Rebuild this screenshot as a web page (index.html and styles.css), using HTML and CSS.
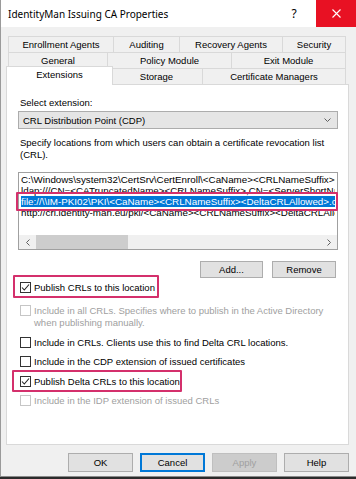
FILE: index.html
```html
<!DOCTYPE html>
<html lang="en">
  <head>
    <meta charset="UTF-8" />
    <meta name="viewport" content="width=device-width, initial-scale=1.0" />
    <title>IdentityMan Issuing CA Properties</title>
    <link rel="stylesheet" href="styles.css">
  </head>
  <body>
    <div class="window">
      <div class="titlebar">
        <span class="title">IdentityMan Issuing CA Properties</span>
        <span class="help">?</span>
        <span class="close">
          <svg width="9" height="9" viewBox="0 0 9 9">
            <path d="M0.5 0.5L8.5 8.5M8.5 0.5L0.5 8.5" stroke="#fff" stroke-width="1.1" fill="none" />
          </svg>
        </span>
      </div>

      <div class="tabs">
        <div class="tab-row row-1">
          <div class="tab">Enrollment Agents</div>
          <div class="tab">Auditing</div>
          <div class="tab">Recovery Agents</div>
          <div class="tab">Security</div>
        </div>
        <div class="tab-row row-2">
          <div class="tab">General</div>
          <div class="tab">Policy Module</div>
          <div class="tab">Exit Module</div>
        </div>
        <div class="tab-row row-3">
          <div class="tab active">Extensions</div>
          <div class="tab">Storage</div>
          <div class="tab">Certificate Managers</div>
        </div>
      </div>

      <div class="panel">
        <div class="field-label">Select extension:</div>
        <div class="combo">
          <span>CRL Distribution Point (CDP)</span>
          <svg width="7" height="4" viewBox="0 0 7 4">
            <path d="M0.5 0.5L3.5 3.5L6.5 0.5" stroke="#606060" fill="none" />
          </svg>
        </div>

        <div class="desc">
          Specify locations from which users can obtain a certificate revocation list<br>(CRL).
        </div>

        <div class="listbox">
          <div class="list-lines">
            <div class="list-line">C:\Windows\system32\CertSrv\CertEnroll\&lt;CaName&gt;&lt;CRLNameSuffix&gt;&lt;DeltaCRLAllowed&gt;.crl</div>
            <div class="list-line">ldap:///CN=&lt;CATruncatedName&gt;&lt;CRLNameSuffix&gt;,CN=&lt;ServerShortName&gt;,CN=CDP,CN=Public Key Services</div>
            <div class="list-line selected">file://\\IM-PKI02\PKI\&lt;CaName&gt;&lt;CRLNameSuffix&gt;&lt;DeltaCRLAllowed&gt;.crl</div>
            <div class="list-line">http://crl.identity-man.eu/pki/&lt;CaName&gt;&lt;CRLNameSuffix&gt;&lt;DeltaCRLAllowed&gt;.crl</div>
          </div>
          <div class="hscroll">
            <span class="arrow">
              <svg width="4" height="7" viewBox="0 0 4 7"><path d="M3.5 0.5L0.5 3.5L3.5 6.5" stroke="#606060" fill="none" /></svg>
            </span>
            <span class="thumb"></span>
            <span class="track"></span>
            <span class="arrow">
              <svg width="4" height="7" viewBox="0 0 4 7"><path d="M0.5 0.5L3.5 3.5L0.5 6.5" stroke="#606060" fill="none" /></svg>
            </span>
          </div>
        </div>

        <div class="list-actions">
          <div class="btn btn-add">Add...</div>
          <div class="btn btn-remove">Remove</div>
        </div>

        <div class="checks">
          <div class="check">
            <span class="box checked">
              <svg width="9" height="9" viewBox="0 0 9 9"><path d="M1 4.5L3.3 7L8 1.5" stroke="#222" stroke-width="1.1" fill="none" /></svg>
            </span>
            <span>Publish CRLs to this location</span>
          </div>
          <div class="check disabled check-sub">
            <span class="box"></span>
            <span>Include in all CRLs. Specifies where to publish in the Active Directory<br>when publishing manually.</span>
          </div>
          <div class="check">
            <span class="box"></span>
            <span>Include in CRLs. Clients use this to find Delta CRL locations.</span>
          </div>
          <div class="check">
            <span class="box"></span>
            <span>Include in the CDP extension of issued certificates</span>
          </div>
          <div class="check">
            <span class="box checked">
              <svg width="9" height="9" viewBox="0 0 9 9"><path d="M1 4.5L3.3 7L8 1.5" stroke="#222" stroke-width="1.1" fill="none" /></svg>
            </span>
            <span>Publish Delta CRLs to this location</span>
          </div>
          <div class="check disabled">
            <span class="box"></span>
            <span>Include in the IDP extension of issued CRLs</span>
          </div>
        </div>
      </div>

      <div class="buttons">
        <div class="btn">OK</div>
        <div class="btn default">Cancel</div>
        <div class="btn disabled">Apply</div>
        <div class="btn">Help</div>
      </div>

      <!-- highlight marks drawn over the dialog -->
      <div class="callout callout-list"></div>
      <div class="callout callout-publish"></div>
      <div class="callout callout-delta"></div>
    </div>
  </body>
</html>
```

FILE: styles.css
```css
body {
  margin: 0;
  background: #2b2b2b;
  font-family: "Liberation Sans", Arial, sans-serif;
  font-size: 9.5px;
  color: #000;
}
.window {
  position: relative;
  width: 356px;
  height: 477px;
  box-sizing: border-box;
  background: #f0f0f0;
  border-left: 1px solid #9a9a9a;
  border-bottom: 1px solid #8a8a8a;
}
.titlebar {
  display: flex;
  align-items: center;
  height: 27px;
  background: #fff;
}
.title {
  flex: 1;
  padding-left: 7px;
  font-family: "Noto Sans", sans-serif;
  font-size: 10px;
}
.help {
  width: 20px;
  margin-right: 12px;
  text-align: center;
  font-family: "Noto Sans", sans-serif;
  font-size: 12px;
}
.close {
  width: 40px;
  height: 27px;
  background: #e81123;
  display: flex;
  align-items: center;
  justify-content: center;
}

/* tab strip */
.tabs {
  margin: 9px 0 0 7px;
  width: 338px;
}
.tab-row {
  display: grid;
  height: 16px;
}
.row-1 {
  grid-template-columns: 106px 66px 103px 63px;
}
.row-2 {
  grid-template-columns: 100px 124px 114px;
}
.row-3 {
  grid-template-columns: 103px 92px 143px;
}
.tab {
  border: 1px solid #d9d9d9;
  border-bottom: none;
  margin-left: -1px;
  background: #f0f0f0;
  text-align: center;
  line-height: 15px;
  white-space: nowrap;
}
.tab:first-child {
  margin-left: 0;
}
.tab.active {
  position: relative;
  z-index: 1;
  margin: -2px -2px -1px -2px;
  background: #fff;
  line-height: 16px;
}

/* page content */
.panel {
  margin-left: 5px;
  width: 343px;
  height: 361px;
  box-sizing: border-box;
  border: 1px solid #d9d9d9;
  background: #fff;
  padding: 12px 10px 0 11px;
}
.field-label {
  line-height: 12px;
  padding-left: 2px;
}
.combo {
  margin-top: 2px;
  height: 18px;
  box-sizing: border-box;
  border: 1px solid #acacac;
  background: #e5e5e5;
  display: flex;
  align-items: center;
  justify-content: space-between;
  padding: 0 6px 0 4px;
}
.desc {
  margin-top: 8px;
  line-height: 12px;
  padding-left: 2px;
}
.listbox {
  margin-top: 11px;
  height: 78px;
  box-sizing: border-box;
  border: 1px solid #a0a0a0;
  background: #fff;
  display: flex;
  flex-direction: column;
}
.list-lines {
  flex: 1;
  padding-top: 1px;
  overflow: hidden;
}
.list-line {
  margin: 0 2px;
  font-size: 9.8px;
  line-height: 11px;
  white-space: nowrap;
  overflow: hidden;
}
.list-line.selected {
  background: #0078d7;
  color: #fff;
}
.hscroll {
  height: 14px;
  display: flex;
  background: #f0f0f0;
}
.hscroll .arrow {
  width: 17px;
  display: flex;
  align-items: center;
  justify-content: center;
}
.hscroll .thumb {
  width: 92px;
  background: #cdcdcd;
}
.hscroll .track {
  flex: 1;
}
.list-actions {
  margin-top: 11px;
  padding-right: 2px;
  display: flex;
  justify-content: flex-end;
  gap: 9px;
}
.btn {
  box-sizing: border-box;
  border: 1px solid #adadad;
  background: #e1e1e1;
  text-align: center;
}
.list-actions .btn {
  height: 17px;
  line-height: 15px;
}
.btn-add {
  width: 63px;
}
.btn-remove {
  width: 64px;
}

/* checkboxes */
.checks {
  margin-top: 4px;
  display: flex;
  flex-direction: column;
  gap: 7.5px;
}
.check {
  display: flex;
  align-items: flex-start;
  gap: 3px;
  padding-left: 2px;
  line-height: 12px;
  white-space: nowrap;
}
.check-sub {
  margin-top: 3.5px;
}
.box {
  width: 11px;
  height: 11px;
  box-sizing: border-box;
  border: 1px solid #333;
  background: #fff;
  display: flex;
  align-items: center;
  justify-content: center;
}
.check.disabled {
  color: #a0a0a0;
}
.check.disabled .box {
  border-color: #c6c6c6;
}

/* dialog buttons */
.buttons {
  margin-top: 8px;
  padding-left: 67px;
  display: flex;
  gap: 7px;
}
.buttons .btn {
  width: 65px;
  height: 19px;
  line-height: 17px;
}
.btn.default {
  border-color: #0078d7;
  box-shadow: inset 0 0 0 1px #0078d7;
}
.btn.disabled {
  background: #cccccc;
  border-color: #bfbfbf;
  color: #a0a0a0;
}

/* annotation boxes */
.callout {
  position: absolute;
  box-sizing: border-box;
  border: 2px solid #d4306c;
  border-radius: 1px;
}
.callout-list {
  left: 15px;
  top: 192px;
  width: 322px;
  height: 19px;
}
.callout-publish {
  left: 12px;
  top: 275px;
  width: 146px;
  height: 23px;
}
.callout-delta {
  left: 11px;
  top: 370px;
  width: 170px;
  height: 22px;
}
```
